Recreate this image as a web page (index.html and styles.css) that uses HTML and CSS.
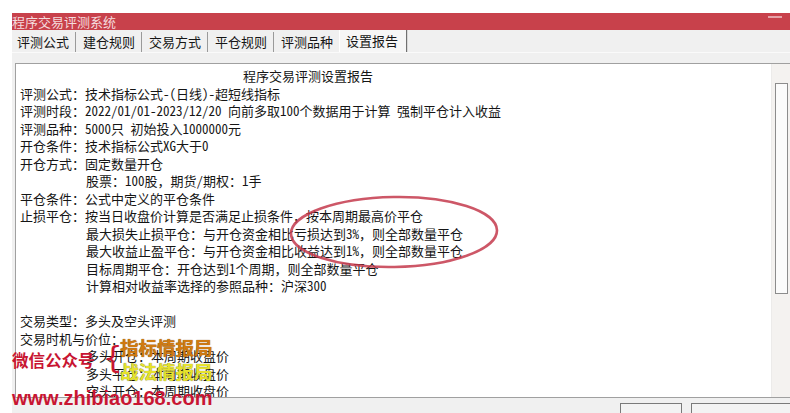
FILE: index.html
```html
<!DOCTYPE html>
<html lang="zh-CN">
<head>
  <meta charset="UTF-8">
  <title>程序交易评测系统</title>
  <link rel="stylesheet" href="styles.css">
</head>
<body>
  <div class="window">
    <div class="titlebar">
      <span class="title">程序交易评测系统</span>
      <span class="min"></span>
    </div>

    <div class="tabbar">
      <span class="tab">评测公式</span>
      <span class="tab">建仓规则</span>
      <span class="tab">交易方式</span>
      <span class="tab">平仓规则</span>
      <span class="tab last">评测品种</span>
      <span class="tab active">设置报告</span>
    </div>

    <div class="panel">
      <div class="report">
        <div class="ln head">程序交易评测设置报告</div>
        <div class="ln">评测公式：技术指标公式-(日线)-超短线指标</div>
        <div class="ln">评测时段：2022/01/01-2023/12/20 向前多取100个数据用于计算 强制平仓计入收益</div>
        <div class="ln">评测品种：5000只 初始投入1000000元</div>
        <div class="ln">开仓条件：技术指标公式XG大于0</div>
        <div class="ln">开仓方式：固定数量开仓</div>
        <div class="ln sub">股票：100股，期货/期权：1手</div>
        <div class="ln">平仓条件：公式中定义的平仓条件</div>
        <div class="ln">止损平仓：按当日收盘价计算是否满足止损条件，按本周期最高价平仓</div>
        <div class="ln sub">最大损失止损平仓：与开仓资金相比亏损达到3%，则全部数量平仓</div>
        <div class="ln sub">最大收益止盈平仓：与开仓资金相比收益达到1%，则全部数量平仓</div>
        <div class="ln sub">目标周期平仓：开仓达到1个周期，则全部数量平仓</div>
        <div class="ln sub">计算相对收益率选择的参照品种：沪深300</div>
        <div class="ln">&nbsp;</div>
        <div class="ln">交易类型：多头及空头评测</div>
        <div class="ln">交易时机与价位：</div>
        <div class="ln sub">多头开仓：本周期收盘价</div>
        <div class="ln sub">多头平仓：本周期收盘价</div>
        <div class="ln sub">空头开仓：本周期收盘价</div>
      </div>
      <div class="scroll">
        <div class="thumb"></div>
      </div>
    </div>

    <div class="footer">
      <span class="btn small"></span>
      <span class="btn wide"></span>
    </div>
  </div>

  <!-- hand drawn mark and watermark lie over the window -->
  <svg class="circle" width="230" height="90" viewBox="0 0 230 90">
    <ellipse cx="108" cy="43" rx="103" ry="35" fill="none" stroke="#c43a4c" stroke-width="2.6" stroke-opacity="0.85" transform="rotate(-1 108 43)"/>
  </svg>

  <div class="wm wx">微信公众号</div>
  <div class="wm brace">{</div>
  <div class="wm zb">指标情报局</div>
  <div class="wm zf">战法情报局</div>
  <div class="wm url">www.zhibiao168.com</div>
</body>
</html>
```

FILE: styles.css
```css
body {
  margin: 0;
  width: 790px;
  height: 413px;
  overflow: hidden;
  background: #fff;
  position: relative;
  font-family: "Noto Sans Mono CJK SC", "Noto Sans CJK SC", sans-serif;
  font-size: 13px;
  color: #151515;
}

.window {
  margin-top: 13px;
  margin-left: 12px;
  width: 778px;
  background: #f0f0f0;
}

.titlebar {
  height: 17px;
  background: #c8414b;
  color: #f5dcde;
  line-height: 17px;
  display: flex;
  justify-content: space-between;
}

.min {
  width: 14px;
  height: 2px;
  margin-top: 3px;
  margin-right: 8px;
  background: #e6a2a8;
}

.tabbar {
  height: 22px;
  border-bottom: 1px solid #fafafa;
  display: flex;
  align-items: flex-end;
}

.tab {
  height: 20px;
  line-height: 20px;
  padding: 0 6px 0 7px;
  border-right: 1px solid #9a9a9a;
}

.tab:first-child {
  padding-left: 5px;
}

.tab.last {
  border-right: none;
}

.tab.active {
  height: 22px;
  line-height: 22px;
  padding: 0 8px 0 6px;
  background: #f6f6f6;
  border-left: 1px solid #fff;
  border-right: 1px solid #707070;
  box-shadow: 1px 0 0 #d8d8d8;
}

.panel {
  margin-top: 10px;
  margin-left: 3px;
  height: 333px;
  display: flex;
  background: #fff;
  border-top: 1px solid #a0a0a0;
  border-left: 1px solid #a0a0a0;
  border-bottom: 1px solid #a0a0a0;
}

.report {
  flex: 1;
  padding-top: 3px;
  padding-left: 4px;
  overflow: hidden;
}

.ln {
  height: 17.5px;
  line-height: 17.5px;
  white-space: nowrap;
}

.head {
  padding-left: 223px;
}

.sub {
  padding-left: 66px;
}

.scroll {
  width: 18px;
  background: #f4f2f0;
  border-left: 1px solid #ecebea;
}

.thumb {
  margin: 19px 2px 0 3px;
  height: 209px;
  border: 1px solid #8c8c8c;
  background: #fbfbfb;
}

.footer {
  display: flex;
  justify-content: flex-end;
  gap: 9px;
  padding-top: 5px;
  height: 20px;
}

.btn {
  height: 20px;
  border: 1px solid #7a7a7a;
  background: #f3f3f3;
}

.small {
  width: 60px;
}

.wide {
  width: 110px;
  margin-right: -13px;
}

.circle {
  position: absolute;
  left: 286px;
  top: 189px;
}

.wm {
  position: absolute;
  font-family: "Noto Sans CJK SC", sans-serif;
  font-weight: bold;
  white-space: nowrap;
}

.wx {
  left: 12px;
  top: 349px;
  font-size: 16.5px;
  line-height: 22px;
  color: #c81532;
}

.brace {
  left: 103px;
  top: 337px;
  font-family: "DejaVu Sans", sans-serif;
  font-weight: normal;
  font-size: 31px;
  line-height: 40px;
  color: #c81532;
}

.zb {
  left: 120px;
  top: 335px;
  font-size: 18.5px;
  line-height: 24px;
  color: #d07a10;
  text-shadow: 0 0 1px #6a3a00;
}

.zf {
  left: 120px;
  top: 359px;
  font-size: 18.5px;
  line-height: 24px;
  color: #e6e22c;
  text-shadow: 0 0 1px #5a5a00;
}

.url {
  left: 12px;
  top: 386px;
  font-family: "Liberation Sans", sans-serif;
  font-size: 20px;
  line-height: 24px;
  color: #c81532;
}
```
